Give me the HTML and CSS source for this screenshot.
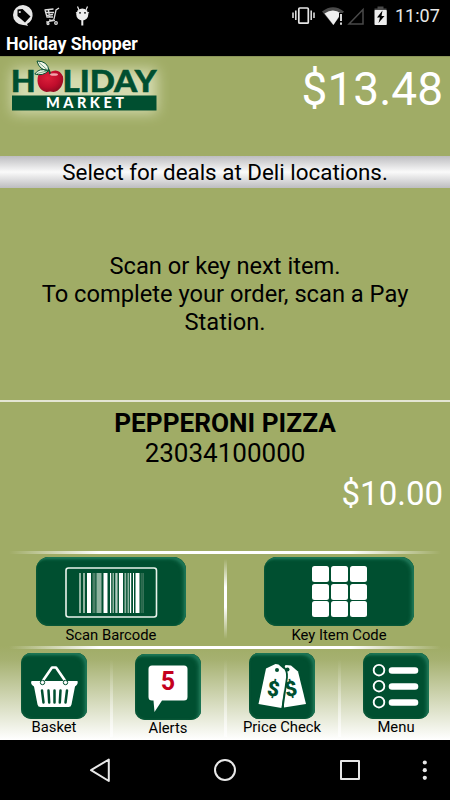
FILE: index.html
```html
<!DOCTYPE html>
<html lang="en">
<head>
    <meta charset="UTF-8">
    <meta name="viewport" content="width=device-width, initial-scale=1.0">
    <title>Holiday Shopper</title>
    <link rel="stylesheet" href="styles.css">
</head>
<body>
    <div class="phone">
        <div class="status-bar">
            <svg class="status-left" width="100" height="33" viewBox="0 0 100 33">
                <path d="M23 5a10 10 0 1 0 0 20q2 0 5 1l-1-2A10 10 0 0 0 23 5z" fill="#e6e6e6"/>
                <path d="M17.500 9.500l5-.5 8 7.500-5.500 6-7.500-6.500z" fill="#000"/>
                <circle cx="19.800" cy="12" r="1.100" fill="#e6e6e6"/>
                <g fill="none" stroke="#ddd" stroke-width="1.300">
                    <path d="M59 8l-3 2-2 9q0 2-5 1M44.500 10l9-1M45 12.500h9M46 15.500l7-1M45 10l2 7h6M48.500 10l1 7"/>
                    <path d="M46 22l9-1.500" stroke-width="1"/>
                    <circle cx="48" cy="23.500" r="1"/>
                    <circle cx="56" cy="23" r="1.300"/>
                </g>
                <g fill="#ececec">
                    <circle cx="82.300" cy="14.500" r="6"/>
                    <path d="M79 10l-1.500-3.500M86 10l1.500-3.500M76 12.500l2 1M89 12.500l-2 1" stroke="#ececec" stroke-width="1.200"/>
                    <rect x="81.300" y="20" width="2" height="5.500"/>
                </g>
                <circle cx="80" cy="12.800" r=".9"/>
                <circle cx="85" cy="12.800" r=".9"/>
            </svg>
            <svg class="status-right" width="100" height="33" viewBox="290 0 100 33">
                <rect x="298.800" y="8" width="9.500" height="15.200" rx="1" fill="none" stroke="#e6e6e6" stroke-width="1.700"/>
                <path d="M295.800 10.500v9.500M293 12.500v5.500M311.200 10.500v9.500M314 12.500v5.500" stroke="#e6e6e6" stroke-width="1.500"/>
                <path d="M322 11.500Q333 3 344 11.500L333 25z" fill="#4a4a4a"/>
                <path d="M324.500 13.500Q333 7.500 341 13.500L333.500 25z" fill="#eee"/>
                <path d="M339 13h5v12h-5z" fill="#000"/>
                <path d="M341 14v7M341 22.500v2.300" stroke="#eee" stroke-width="1.800"/>
                <path d="M349 24l14-14.500v14.500z" fill="none" stroke="#4a4a4a" stroke-width="1.500"/>
                <path d="M374.500 8.500h3v-2h6v2h3v2h-12z" fill="#4a4a4a"/>
                <rect x="374.500" y="10" width="12.300" height="15" rx=".8" fill="#eee"/>
                <path d="M382.500 10.500l-5.500 7h3l-1.500 5.500 6-7h-3z" fill="#000"/>
            </svg>
            <span class="clock">11:07</span>
        </div>
        <div class="title-bar">Holiday Shopper</div>

        <div class="header">
            <svg class="logo" width="170" height="75" viewBox="0 0 170 75">
                <defs>
                    <filter id="glow" x="-20%" y="-40%" width="140%" height="180%">
                        <feGaussianBlur stdDeviation="7"/>
                    </filter>
                    <radialGradient id="apple" cx=".4" cy=".35" r=".7">
                        <stop offset="0" stop-color="#dc1f3a"/>
                        <stop offset=".6" stop-color="#c00d2c"/>
                        <stop offset="1" stop-color="#8b0b20"/>
                    </radialGradient>
                </defs>
                <rect x="12" y="12" width="145" height="44" fill="#e6eac8" opacity=".75" filter="url(#glow)"/>
                <g class="logo-name">
                    <text x="10.800" y="34.500" textLength="25" lengthAdjust="spacingAndGlyphs">H</text>
                    <text x="62.500" y="34.500" textLength="94" lengthAdjust="spacingAndGlyphs">LIDAY</text>
                </g>
                <path d="M50 15q-7-4-11.500 2.500c-3 9 1 16 8 17.500q4-1 7 0c6-.5 11-8 9.500-15.500q-4-9-13-4.500z" fill="url(#apple)"/>
                <path d="M50 17q0-4-3-6" fill="none" stroke="#064f30" stroke-width="1.500"/>
                <ellipse cx="54" cy="17.500" rx="4" ry="1.300" fill="#f3a4ad"/>
                <path d="M37 4q11 0 12 10-10-1-12-10zM34.800 17q4-6.500 14-3.500-6 6-14 3.500z" fill="#f2f6ea" stroke="#064f30" stroke-width="1"/>
                <path d="M39 5.500l9 8M37 16.500l10-2.500" stroke="#3d7f55" stroke-width=".7"/>
                <rect x="12" y="38.500" width="144.500" height="15" fill="#004f30"/>
                <text class="logo-sub" x="46" y="51.200" textLength="78">MARKET</text>
            </svg>
            <div class="total">$13.48</div>
        </div>

        <div class="banner">Select for deals at Deli locations.</div>

        <div class="message">Scan or key next item.<br>To complete your order, scan a Pay<br>Station.</div>

        <div class="item">
            <div class="item-name">PEPPERONI PIZZA</div>
            <div class="item-code">23034100000</div>
            <div class="item-price">$10.00</div>
        </div>

        <div class="rule"></div>
        <div class="actions">
            <div class="action">
                <div class="button wide">
                    <svg width="150" height="68" viewBox="0 0 150 68">
                        <rect x="30" y="10" width="90.500" height="49" rx="2.500" fill="none" stroke="#e9f3ec" stroke-width="1.600"/>
                        <g fill="#fff">
                            <path d="M51 15h4v40h-4zM67.500 15h4v40h-4zM83 15h4v40h-4zM99.500 15h4v40h-4z"/>
                            <path d="M74 15h1.200v40H74zM79.500 15h1.200v40h-1.200zM94 15h1.200v40H94zM97 15h1v40h-1z"/>
                        </g>
                        <g fill="#8fb39f">
                            <path d="M43 15h2v40h-2zM47 15h2v40h-2zM60.500 15h5v40h-5zM76.500 15h1.500v40h-1.500zM81.300 15h.8v40h-.8z"/>
                            <path d="M88.500 15h1.700v40h-1.700zM91.500 15h1.700v40h-1.700z"/>
                        </g>
                        <path d="M56.500 15h3v40h-3zM104.800 15h.8v40h-.8zM106.500 15h1.200v40h-1.200z" fill="#4c8067"/>
                    </svg>
                </div>
                <div class="label">Scan Barcode</div>
            </div>
            <div class="divider"></div>
            <div class="action">
                <div class="button wide">
                    <div class="keypad">
                        <i></i><i></i><i></i>
                        <i></i><i></i><i></i>
                        <i></i><i></i><i></i>
                    </div>
                </div>
                <div class="label">Key Item Code</div>
            </div>
        </div>

        <div class="bottom">
            <div class="rule"></div>
            <div class="tabs">
                <div class="tab">
                    <div class="button">
                        <svg width="66" height="66" viewBox="0 0 66 66">
                            <path d="M21 29l10-14.500h4l10 14.500" fill="none" stroke="#fff" stroke-width="2.600" stroke-linejoin="round"/>
                            <path d="M10.500 28h46q1 3-2.500 5.500l-3.500 18q-.5 2.500-3 2.500h-28q-2.500 0-3-2.500l-3.500-18q-4-2.500-2.500-5.500z" fill="#fff"/>
                            <g stroke="#004f30" stroke-width="2.500" stroke-linecap="round">
                                <path d="M21 37.500l1.500 12M27.500 37.500l.7 12M33.500 37.500v12M39.500 37.500l-.7 12M46 37.500l-1.500 12"/>
                            </g>
                            <circle cx="21.500" cy="29.500" r="2.200" fill="#fff" stroke="#004f30"/>
                            <circle cx="44.500" cy="29.500" r="2.200" fill="#fff" stroke="#004f30"/>
                        </svg>
                    </div>
                    <div class="label">Basket</div>
                </div>
                <div class="divider"></div>
                <div class="tab alerts">
                    <div class="button">
                        <svg width="66" height="66" viewBox="0 0 66 66">
                            <path d="M17 11.500h32q3.500 0 3.500 3.500v28q0 3.500-3.500 3.500H27L19.500 58 18.500 46.500H17q-3.500 0-3.500-3.500V15q0-3.500 3.500-3.500z" fill="#fff"/>
                            <text class="count" x="32.800" y="35.500">5</text>
                        </svg>
                    </div>
                    <div class="label">Alerts</div>
                </div>
                <div class="divider"></div>
                <div class="tab">
                    <div class="button">
                        <svg width="66" height="66" viewBox="0 0 66 66">
                            <path d="M34 17l2.500-5 5.500.5 7 6 8 32.500-22 3.500z" fill="#fff"/>
                            <path d="M17 15.500l9.500-4.500 3 .5 8 7L32.500 55 9.500 51z" fill="#fff"/>
                            <path d="M33.500 55.500l4.500-31q.5-7-3.500-10.500" fill="none" stroke="#004f30" stroke-width="1.800"/>
                            <circle cx="28" cy="17" r="2" fill="#004f30"/>
                            <circle cx="38.500" cy="16.500" r="2" fill="#004f30"/>
                            <text class="dollar" x="24.300" y="43" transform="rotate(9 24 36)">$</text>
                            <text class="dollar" x="42" y="43" transform="rotate(-11 42 36)">$</text>
                        </svg>
                    </div>
                    <div class="label">Price Check</div>
                </div>
                <div class="divider"></div>
                <div class="tab">
                    <div class="button">
                        <svg width="66" height="66" viewBox="0 0 66 66">
                            <g fill="none" stroke="#fff" stroke-width="1.900">
                                <circle cx="16" cy="17.200" r="5.300"/>
                                <circle cx="16" cy="33.200" r="5.300"/>
                                <circle cx="16" cy="49.200" r="5.300"/>
                            </g>
                            <path d="M29 17.500h23M29 33.500h23M29 49.500h23" stroke="#fff" stroke-width="6.600" stroke-linecap="round"/>
                        </svg>
                    </div>
                    <div class="label">Menu</div>
                </div>
            </div>
        </div>

        <div class="nav-bar">
            <svg width="450" height="60" viewBox="0 0 450 60" fill="none" stroke="#e8e8e8" stroke-width="2" stroke-linejoin="round">
                <path d="M108.800 19.500v21.500L91 30.200z"/>
                <circle cx="225" cy="30" r="10"/>
                <rect x="341" y="21" width="18" height="18"/>
                <g fill="#e8e8e8" stroke="none">
                    <circle cx="424.800" cy="22.500" r="2.100"/>
                    <circle cx="424.800" cy="30.200" r="2.100"/>
                    <circle cx="424.800" cy="37.800" r="2.100"/>
                </g>
            </svg>
        </div>
    </div>
</body>
</html>
```

FILE: styles.css
```css
* {
    box-sizing: border-box;
}
body {
    margin: 0;
    font-family: Roboto, sans-serif;
    color: #000;
    background-color: #000;
}
svg {
    display: block;
}
.phone {
    width: 450px;
    height: 800px;
    display: flex;
    flex-direction: column;
    overflow: hidden;
    background-color: #a0ac66;
}
.status-bar {
    height: 33px;
    display: flex;
    align-items: flex-start;
    background-color: #000;
}
.status-right {
    margin-left: 190px;
}
.clock {
    padding-left: 5px;
    font-size: 18px;
    line-height: 32px;
    color: #e8e8e8;
}
.title-bar {
    height: 23px;
    padding-left: 6px;
    background-color: #000;
    color: #fff;
    font-size: 17.8px;
    font-weight: bold;
    line-height: 22px;
}
.header {
    height: 100px;
    display: flex;
    justify-content: space-between;
    padding-right: 7px;
    border-top: 1px solid #8c965a;
}
.logo-name {
    font-family: Lato, sans-serif;
    font-size: 31px;
    font-weight: 900;
    fill: #004f30;
    stroke: #004f30;
    stroke-width: .5px;
}
.logo-sub {
    font-family: Lato, sans-serif;
    font-size: 14.5px;
    font-weight: 900;
    fill: #fff;
}
.total {
    font-size: 46px;
    line-height: 65px;
    color: #fff;
}
.banner {
    height: 32px;
    font-size: 22.4px;
    line-height: 32px;
    text-align: center;
    background: linear-gradient(#bdbdc0, #fafafa 50%, #bdbdc0);
}
.message {
    height: 212px;
    padding-top: 64px;
    font-size: 23.7px;
    line-height: 28px;
    text-align: center;
}
.item {
    height: 151px;
    padding: 6px 7px 0;
    border-top: 2px solid #e4e6d4;
    text-align: center;
}
.item-name {
    font-size: 26.2px;
    font-weight: bold;
    line-height: 30px;
}
.item-code {
    font-size: 26px;
    line-height: 30px;
}
.item-price {
    margin-top: 6px;
    font-size: 33px;
    line-height: 40px;
    text-align: right;
    color: #fff;
}
.rule {
    height: 3px;
    background: linear-gradient(90deg, rgba(255,255,255,0) 2%, #fff 22%, #fff 78%, rgba(255,255,255,0) 98%);
}
.actions {
    height: 92px;
    display: grid;
    grid-template-columns: 222px 6px 222px;
    padding-top: 3px;
}
.action, .tab {
    display: flex;
    flex-direction: column;
    align-items: center;
}
.button {
    width: 66px;
    height: 66px;
    display: flex;
    align-items: center;
    justify-content: center;
    border-radius: 10px;
    background-color: #004f30;
    box-shadow: inset -2px 2px 2px #1d7555, inset -4px 3px 3px #0d6041, inset 1px -1px 2px #0c5a3a;
}
.button.wide {
    width: 150px;
    height: 69px;
    border-radius: 13px;
}
.label {
    font-size: 14.8px;
    line-height: 18px;
    white-space: nowrap;
}
.tab .label {
    line-height: 17px;
}
.keypad {
    display: grid;
    grid-template-columns: repeat(3, 17px);
    grid-auto-rows: 16px;
    column-gap: 2px;
    row-gap: 1.5px;
}
.keypad i {
    border-radius: 2.5px;
    background-color: #fff;
}
.divider {
    width: 3px;
    margin: 6px auto 0;
    background: linear-gradient(rgba(255,255,255,0), #fff 35%, #fff 60%, rgba(255,255,255,0));
}
.actions .divider {
    height: 80px;
    margin-top: 2px;
}
.bottom {
    height: 94px;
    background: linear-gradient(#a0ac66, #a6b171 15%, #fff);
}
.tabs {
    display: grid;
    grid-template-columns: 108px 6px 108px 6px 108px 6px 108px;
    padding-top: 4px;
}
.tabs .divider {
    background: linear-gradient(rgba(255,255,255,0), rgba(255,255,255,.7));
}
.alerts {
    padding-top: 1px;
}
.count {
    font-size: 25px;
    font-weight: bold;
    text-anchor: middle;
    fill: #c4001d;
}
.dollar {
    font-size: 21px;
    font-weight: 900;
    text-anchor: middle;
    fill: #004f30;
}
.nav-bar {
    height: 60px;
    background-color: #000;
}
```
